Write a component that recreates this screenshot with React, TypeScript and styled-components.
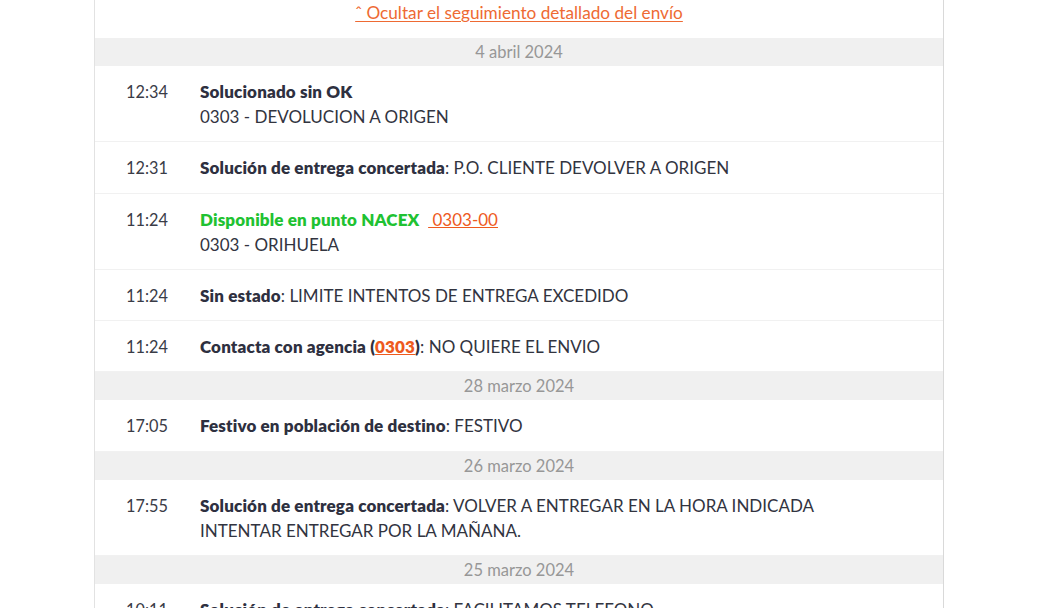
import React from "react";
import styled, { createGlobalStyle } from "styled-components";

const Global = createGlobalStyle`
  html, body { margin: 0; padding: 0; background: #ffffff; }
  body { font-family: Lato, "Open Sans", sans-serif; color: #32343f; }
`;

const Page = styled.div`
  padding-left: 94px;
  width: 850px;
`;

const Card = styled.section`
  border-left: 1px solid #e2e2e2;
  border-right: 1px solid #d9d9d9;
  background: #fff;
`;

const ToggleRow = styled.div`
  text-align: center;
  padding: 0 0 13px;
  line-height: 25px;
`;

const ToggleLink = styled.a`
  color: #ee6a33;
  font-size: 17.2px;
  text-decoration: underline;
  text-underline-offset: 2px;
  cursor: pointer;
`;

const DateBand = styled.div`
  background: #f0f0f0;
  color: #979797;
  text-align: center;
  font-size: 16.5px;
  line-height: 28px;
  height: 28px;
`;

const Row = styled.div`
  display: grid;
  grid-template-columns: 105px 1fr;
  padding: 13px 0 12px;
  border-bottom: 1px solid #f1f1f1;
  line-height: 25.2px;
  font-size: 17px;
  &:last-child { border-bottom: none; }
`;

const Time = styled.div`
  padding-left: 31px;
  font-size: 16.3px;
  color: #3a3c47;
`;

const Body = styled.div`
  color: #32343f;
`;

const Title = styled.span<{ $green?: boolean }>`
  font-weight: 800;
  letter-spacing: 0.15px;
  color: ${(p) => (p.$green ? "#1fc232" : "#2e3040")};
`;

const Code = styled.a<{ $bold?: boolean }>`
  color: #ee5a1e;
  text-decoration: underline;
  font-weight: ${(p) => (p.$bold ? 800 : 400)};
`;

type Ev = { time: string; content: React.ReactNode };
type Group = { date: string; events: Ev[] };

const groups: Group[] = [
  {
    date: "4 abril 2024",
    events: [
      {
        time: "12:34",
        content: (
          <>
            <Title>Solucionado sin OK</Title>
            <br />
            0303 - DEVOLUCION A ORIGEN
          </>
        ),
      },
      {
        time: "12:31",
        content: (
          <>
            <Title>Solución de entrega concertada</Title>: P.O. CLIENTE DEVOLVER A ORIGEN
          </>
        ),
      },
      {
        time: "11:24",
        content: (
          <>
            <Title $green>Disponible en punto NACEX</Title>&nbsp;&nbsp;<Code>&nbsp;0303-00</Code>
            <br />
            0303 - ORIHUELA
          </>
        ),
      },
      {
        time: "11:24",
        content: (
          <>
            <Title>Sin estado</Title>: LIMITE INTENTOS DE ENTREGA EXCEDIDO
          </>
        ),
      },
      {
        time: "11:24",
        content: (
          <>
            <Title>
              Contacta con agencia (<Code $bold>0303</Code>)
            </Title>
            : NO QUIERE EL ENVIO
          </>
        ),
      },
    ],
  },
  {
    date: "28 marzo 2024",
    events: [
      {
        time: "17:05",
        content: (
          <>
            <Title>Festivo en población de destino</Title>: FESTIVO
          </>
        ),
      },
    ],
  },
  {
    date: "26 marzo 2024",
    events: [
      {
        time: "17:55",
        content: (
          <>
            <Title>Solución de entrega concertada</Title>: VOLVER A ENTREGAR EN LA HORA INDICADA
            <br />
            INTENTAR ENTREGAR POR LA MAÑANA.
          </>
        ),
      },
    ],
  },
  {
    date: "25 marzo 2024",
    events: [
      {
        time: "10:11",
        content: (
          <>
            <Title>Solución de entrega concertada</Title>: FACILITAMOS TELEFONO
          </>
        ),
      },
    ],
  },
];

export default function App() {
  return (
    <>
      <Global />
      <Page>
        <Card>
          <ToggleRow>
            <ToggleLink>ˆ Ocultar el seguimiento detallado del envío</ToggleLink>
          </ToggleRow>
          {groups.map((g) => (
            <React.Fragment key={g.date}>
              <DateBand>{g.date}</DateBand>
              {g.events.map((e, i) => (
                <Row key={i}>
                  <Time>{e.time}</Time>
                  <Body>{e.content}</Body>
                </Row>
              ))}
            </React.Fragment>
          ))}
        </Card>
      </Page>
    </>
  );
}
